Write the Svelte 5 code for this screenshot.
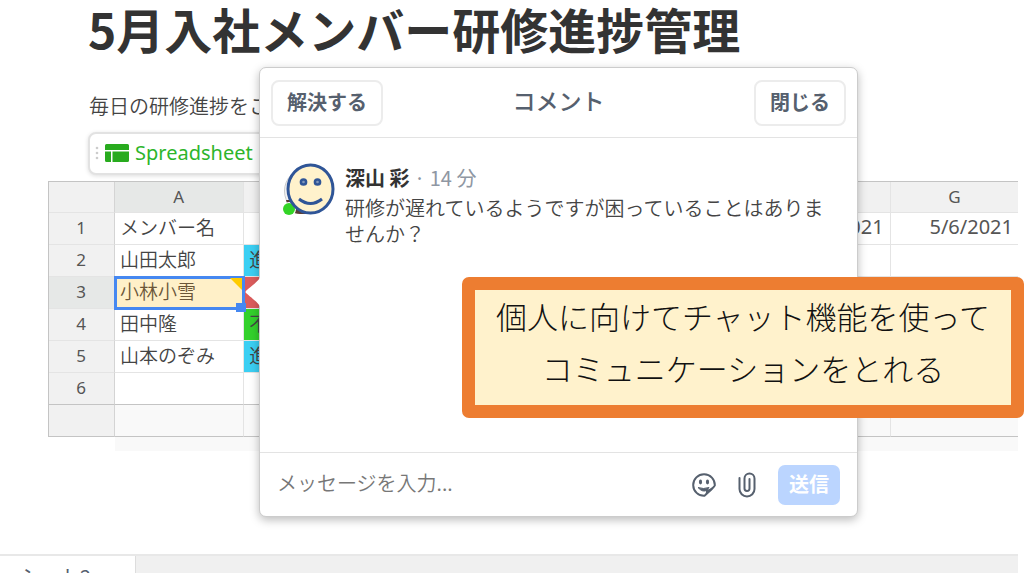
<script>
  const columns = ['A', 'B', 'C', 'D', 'E', 'F', 'G'];
  const rows = [
    { name: 'メンバー名', status: '', tone: '', dates: ['', '', '', '5/5/2021', '5/6/2021'] },
    { name: '山田太郎', status: '進', tone: 'cyan', dates: ['', '', '', '', ''] },
    { name: '小林小雪', status: '', tone: 'red', dates: ['', '', '', '', ''] },
    { name: '田中隆', status: '不', tone: 'green', dates: ['', '', '', '', ''] },
    { name: '山本のぞみ', status: '進', tone: 'cyan', dates: ['', '', '', '', ''] },
    { name: '', status: '', tone: '', dates: ['', '', '', '', ''] },
  ];
  const selected = 2;
  let message = $state('');
</script>

<div class="page">
  <main>
    <h1>5月入社メンバー研修進捗管理</h1>
    <p class="intro">毎日の研修進捗をこ</p>
    <button class="chip">
      <svg class="grip" viewBox="0 0 4 14" aria-hidden="true">
        <circle cx="2" cy="2" r="1.3" /><circle cx="2" cy="7" r="1.3" /><circle cx="2" cy="12" r="1.3" />
      </svg>
      <svg class="sheet" viewBox="0 0 24 18" aria-hidden="true">
        <path d="M1.5 0h21A1.5 1.5 0 0 1 24 1.5V6H0V1.5A1.5 1.5 0 0 1 1.5 0ZM0 7.5h6V18H1.5A1.5 1.5 0 0 1 0 16.5ZM7.5 7.5H24v9a1.5 1.5 0 0 1-1.5 1.5h-15Z" />
      </svg>
      <span>Spreadsheet</span>
      <svg class="caret" viewBox="0 0 10 6" aria-hidden="true"><path d="M0 0h10L5 6Z" /></svg>
    </button>

    <div class="grid">
      <table>
        <thead>
          <tr>
            <th class="num"></th>
            {#each columns as c, i}
              <th class:active={i === 0}>{c}</th>
            {/each}
          </tr>
        </thead>
        <tbody>
          {#each rows as row, i}
            <tr>
              <th class="num" class:active={i === selected}>{i + 1}</th>
              <td class:picked={i === selected}>
                {row.name}
                {#if i === selected}<span class="flag"></span><span class="handle"></span>{/if}
              </td>
              <td class={row.tone}>{row.status}</td>
              {#each row.dates as d}
                <td class="date">{d}</td>
              {/each}
            </tr>
          {/each}
          <tr class="extra">
            <th class="num"></th>
            {#each columns as c}<td></td>{/each}
          </tr>
        </tbody>
      </table>
      <div class="more"></div>
    </div>
  </main>

  <nav class="tabs"><button>シート2</button></nav>

  <section class="popover" aria-label="コメント">
    <svg class="arrow" viewBox="0 0 16 32" aria-hidden="true"><path d="M16 0v32C14 27 3 19 1 17q-1-1 0-2C3 13 14 5 16 0Z" /></svg>
    <header>
      <button class="outline">解決する</button>
      <h2>コメント</h2>
      <button class="outline">閉じる</button>
    </header>
    <div class="thread">
      <svg class="avatar" viewBox="0 0 52 52" aria-hidden="true">
        <circle cx="24" cy="28" r="22.5" fill="#f4f4f4" stroke="#c9c9c9" />
        <path d="M3 37Q6 51 17 51H26L20 37Z" fill="#5a3d36" />
        <circle cx="6" cy="46" r="7" fill="#fff" />
        <circle cx="6" cy="46" r="6" fill="#33d426" />
        <ellipse cx="27.5" cy="26" rx="22.5" ry="24" fill="#fff2cc" stroke="#2f5597" stroke-width="3" />
        <g fill="#8197bb" stroke="#2f5597" stroke-width="2.5">
          <circle cx="20.5" cy="19" r="2.6" /><circle cx="34.5" cy="19" r="2.6" />
        </g>
        <path d="M16 36Q27.5 45 39 36" fill="none" stroke="#2f5597" stroke-width="3" />
      </svg>
      <div>
        <p class="author"><strong>深山 彩</strong> · 14 分</p>
        <p class="text">研修が遅れているようですが困っていることはありませんか？</p>
      </div>
    </div>
    <footer>
      <input aria-label="メッセージ" placeholder="メッセージを入力..." bind:value={message} />
      <button class="icon" aria-label="スタンプ">
        <svg width="24" height="26" viewBox="0 0 24 26" aria-hidden="true">
          <path d="M12.5 23.8A10.8 10.8 0 1 1 22.8 13.5Q22 15.500 12.500 23.800Z" fill="none" stroke="#56606e" stroke-width="2" stroke-linejoin="round" />
          <path d="M12.5 23.5q2-2 1.500-5.500 3.500-.5 8.500-4.500 0 3-9.500 10Z" fill="#56606e" />
          <ellipse cx="8.500" cy="10" rx="1.600" ry="2.400" fill="#56606e" /><ellipse cx="15.500" cy="10" rx="1.600" ry="2.400" fill="#56606e" />
          <path d="M6 15.500q5 5.500 9 2.500l2-2.500q-5.500 2-11 0Z" fill="#56606e" stroke="#56606e" stroke-width="1" stroke-linejoin="round" />
        </svg>
      </button>
      <button class="icon" aria-label="添付">
        <svg width="18" height="26" viewBox="0 0 18 26" fill="none" stroke="#56606e" stroke-width="2" stroke-linecap="round" aria-hidden="true">
          <path d="M1.500 6v11a7.500 7.500 0 0 0 15 0V6.500a5 5 0 0 0-10 0V16.500a2.500 2.500 0 0 0 5 0V7" />
        </svg>
      </button>
      <button class="send">送信</button>
    </footer>
  </section>

  <aside class="callout">個人に向けてチャット機能を使って<br />コミュニケーションをとれる</aside>
</div>

<style>
  :global(body) { margin: 0; background: #fff; }
  * { box-sizing: border-box; }
  .page {
    position: relative;
    display: flex;
    flex-direction: column;
    height: 100vh;
    overflow: hidden;
    font-family: "Noto Sans CJK JP", sans-serif;
    font-size: 20px;
    color: #333;
  }
  button, input { font: inherit; }
  h1, h2, p { margin: 0; }
  main { flex: 1; min-height: 0; overflow: hidden; }
  h1 { margin-left: 88px; font-size: 48px; line-height: 56px; white-space: nowrap; }
  .intro { margin: 32px 0 0 89px; line-height: 36px; font-weight: 350; color: #444; }
  .chip {
    display: flex;
    align-items: center;
    gap: 6px;
    margin: 8px 0 0 88px;
    padding: 0 8px 2px 5px;
    height: 43px;
    border: 2px solid #e2e2e2;
    border-radius: 8px;
    background: #fff;
    box-shadow: 0 1px 4px #0002;
    color: #2db52b;
    font-family: "Noto Sans", sans-serif;
  }
  .grip { width: 4px; height: 14px; fill: #ccc; }
  .sheet { width: 24px; height: 18px; fill: #28ab1e; }
  .caret { width: 10px; height: 6px; fill: #bbb; }
  .grid { margin: 6px 6px 0 48px; overflow: hidden; }
  table {
    width: calc(100% + 2px);
    table-layout: fixed;
    border-collapse: separate;
    border-spacing: 0;
    border: solid #c4c4c4;
    border-width: 1px 0 0 1px;
  }
  th, td { height: 32px; padding: 0 6px 3px 5px; border: solid #e4e4e4; border-width: 0 1px 1px 0; line-height: 28px; white-space: nowrap; }
  th { background: #f1f1f1; font-weight: 400; font-size: 17px; color: #555; text-align: center; font-family: "Noto Sans", sans-serif; }
  thead th { height: 31px; padding-bottom: 1px; }
  th.active { background: #e6e8e7; }
  th.num { width: 66px; padding-bottom: 1px; border-right-color: #d4d4d4; }
  td { font-size: 19px; font-weight: 350; color: #444; }
  td.date { font-size: 20px; text-align: right; font-family: "Noto Sans", sans-serif; font-weight: 400; color: #555; }
  td.cyan { background: #3bcff3; }
  td.red { background: #dc5c5c; }
  td.green { background: #33d12c; }
  td.picked { position: relative; background: #fff0c8; outline: 3px solid #4688f1; outline-offset: -2px; color: #6b5638; }
  .flag { position: absolute; top: 1px; right: 1px; border: 6px solid #fc0; border-left-color: transparent; border-bottom-color: transparent; }
  .handle { position: absolute; right: -3px; bottom: -4px; width: 10px; height: 9px; background: #4688f1; z-index: 1; }
  tbody tr:nth-last-child(2) > *, .extra > * { border-bottom-color: #c4c4c4; }
  .extra td { background: #f9f9f9; }
  .more { height: 14px; margin-left: 67px; background: #f9f9f9; }
  .tabs { height: 19px; margin-right: 6px; border-top: 2px solid #e8e8e8; background: #f0f0f0; }
  .tabs button { width: 136px; height: 40px; padding: 0 24px 0 0; border: 0; border-right: 1px solid #ddd; background: #fff; color: #56606e; }
  .popover {
    position: absolute;
    left: 259px;
    top: 67px;
    width: 599px;
    height: 450px;
    display: flex;
    flex-direction: column;
    border: 1px solid #ccc;
    border-radius: 7px;
    background: #fff;
    box-shadow: 0 3px 10px #0004;
  }
  .arrow { position: absolute; left: -15px; top: 208px; width: 16px; height: 32px; fill: #fff; }
  header { display: grid; grid-template-columns: 1fr auto 1fr; align-items: start; height: 70px; padding: 12px 11px; border-bottom: 1px solid #e3e3e3; }
  .outline { justify-self: start; height: 46px; padding: 0 14px 4px; border: 2px solid #ececec; border-radius: 8px; background: #fff; color: #56606e; font-weight: 700; }
  .outline:last-child { justify-self: end; }
  h2 { font-size: 23px; line-height: 40px; font-weight: 500; color: #56606e; }
  .thread { display: flex; flex: 1; gap: 10px; padding: 23px 24px 0 23px; line-height: 26px; }
  .avatar { flex: none; width: 52px; height: 52px; margin-top: 2px; }
  .author { line-height: 34px; color: #8f97a3; }
  .author strong { color: #333; }
  .text { font-weight: 350; color: #444; }
  footer { display: flex; align-items: center; height: 64px; padding: 0 17px; border-top: 1px solid #e3e3e3; }
  input { flex: 1; min-width: 0; padding: 0 0 4px; border: 0; outline: 0; font-weight: 350; }
  input::placeholder { color: #777; opacity: 1; }
  .icon { display: flex; padding: 0; margin-right: 22px; border: 0; background: none; }
  .send { height: 40px; padding: 0 11px 2px; border: 0; border-radius: 7px; background: #bbd5ff; color: #fff; font-weight: 700; }
  .callout {
    position: absolute;
    left: 462px;
    right: 0;
    top: 277px;
    height: 141px;
    border: 13px solid #ed7d31;
    border-radius: 7px;
    background: #fff2cc;
    color: #111;
    font-size: 31px;
    font-weight: 300;
    line-height: 52px;
    text-align: center;
    white-space: nowrap;
  }
</style>
